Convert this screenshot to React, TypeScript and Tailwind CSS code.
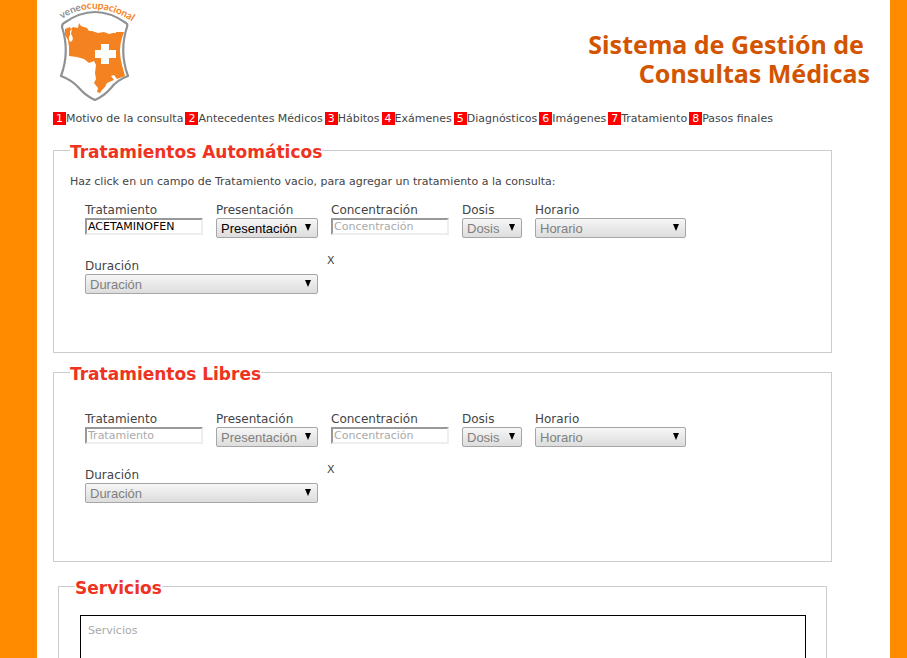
import { useId } from "react";
import type { ReactNode } from "react";

const steps = [
  "Motivo de la consulta",
  "Antecedentes Médicos",
  "Hábitos",
  "Exámenes",
  "Diagnósticos",
  "Imágenes",
  "Tratamiento",
  "Pasos finales",
];

function Logo() {
  return (
    <svg width="84" height="104" viewBox="0 0 84 104" role="img" aria-label="veneocupacional">
      <defs>
        <path id="logo-arc" d="M9 19 Q42 -3 80 22" />
      </defs>
      <text fontSize="10" fontFamily="Lato, sans-serif" fontWeight="700" fill="#8f9193">
        <textPath href="#logo-arc">
          vene<tspan fill="#f58220">ocupacional</tspan>
        </textPath>
      </text>
      <path
        d="M11 23 Q42 1 73 23 Q75 24 74 27 Q66 52 75 76 Q64 80 58 88 Q51 96 42 100 Q33 96 26 88 Q19 80 8 76 Q17 52 9 27 Q9 24 11 23 Z"
        fill="#fff"
        stroke="#8f9193"
        strokeWidth="2.2"
        strokeLinejoin="round"
      />
      <path
        d="M12 29 L17 27 L18 29 L20 27 L25 28 L26 23 L28 26 L34 28 L36 31 L39 31 L45 33 L51 32 L56 34 L60 33 H63 V32 L71 32 L69 38 Q65 50 69 65 L72 76 L64 79 L61 75 L58 76 L61 80 L54 83 L52 87 L49 90 L47 93 L44 92 L45 88 L41 83 L43 79 L42 73 L43 65 L41 61 L36 63 L31 59 L24 57 L16 56 V47 L15 40 L12 35 Z"
        fill="#f58220"
      />
      <path d="M17 31 L19 29 L18 34 Q21 38 19 41 Q17 43 16 40 Q15 37 17 35 Z" fill="#fff" />
      <path d="M48 44 H56 V50 H63 V58 H56 V64 H48 V58 H42 V50 H48 Z" fill="#fff" />
    </svg>
  );
}

function Panel({ title, className, children }: { title: string; className: string; children: ReactNode }) {
  return (
    <fieldset className={`min-w-0 border border-[#cccccc] ${className}`}>
      <legend className="ml-4 pt-1 text-[17px] leading-5 font-bold text-[#ee3322]">{title}</legend>
      {children}
    </fieldset>
  );
}

function TextField({ label, value }: { label: string; value?: string }) {
  const id = useId();
  return (
    <div className="w-[118px]">
      <label htmlFor={id} className="block text-xs leading-4">{label}</label>
      <input
        id={id}
        type="text"
        defaultValue={value}
        placeholder={label}
        className="block h-[17px] w-full border-2 border-t-[#999999] border-r-[#eeeeee] border-b-[#eeeeee] border-l-[#999999] bg-white px-px text-[11px] text-black placeholder:text-[#aaaaaa]"
      />
    </div>
  );
}

function SelectField({ label, width, active }: { label: string; width: string; active?: boolean }) {
  const id = useId();
  return (
    <div className={width}>
      <label htmlFor={id} className="block text-xs leading-4">{label}</label>
      <div className="relative">
        <select
          id={id}
          className={`block h-5 w-full appearance-none rounded-xs border border-[#a6a6a6] bg-linear-to-b from-[#f6f6f6] to-[#dddddd] pt-px pl-1 font-['Liberation_Sans',Arial,sans-serif] text-[13px] leading-[18px] ${active ? "text-black" : "text-[#808080]"}`}
        >
          <option>{label}</option>
        </select>
        <svg className="pointer-events-none absolute top-[6px] right-[7px]" width="6" height="7" viewBox="0 0 6 7" aria-hidden="true">
          <path d="M0 0 H6 L3 7 Z" fill="#000" />
        </svg>
      </div>
    </div>
  );
}

function Treatment({ name }: { name?: string }) {
  return (
    <div className="pl-[31px]">
      <div className="flex flex-wrap gap-x-[13px]">
        <TextField label="Tratamiento" value={name} />
        <SelectField label="Presentación" width="w-[102px]" active={Boolean(name)} />
        <TextField label="Concentración" />
        <SelectField label="Dosis" width="w-[60px]" />
        <SelectField label="Horario" width="w-[151px]" />
      </div>
      <div className="mt-3 flex items-start gap-[9px]">
        <div className="pt-2">
          <SelectField label="Duración" width="w-[233px]" />
        </div>
        <button type="button" aria-label="Quitar tratamiento X" className="pt-[3px] text-[11px] leading-4">X</button>
      </div>
    </div>
  );
}

export default function App() {
  return (
    <div className="h-screen overflow-hidden bg-[#ff8c00] pr-[17px] pl-[37px] font-['DejaVu_Sans',Verdana,sans-serif] text-[11px] text-[#444444]">
      <main className="min-h-full bg-white px-4">
        <header className="flex h-[104px] items-start justify-between">
          <Logo />
          <h1 className="mt-[30px] mr-1 text-right font-['Noto_Sans','Open_Sans',sans-serif] text-[25px] leading-[29px] font-bold text-[#d35400]">
            <span className="mr-[6px]">Sistema de Gestión de</span>
            <br />
            Consultas Médicas
          </h1>
        </header>

        <nav aria-label="Pasos de la consulta" className="mt-2 leading-[13px]">
          <ol className="flex flex-wrap gap-x-[2px]">
            {steps.map((step, i) => (
              <li key={step} className="flex">
                <span className="w-[13px] bg-[#ff0000] text-center text-white">{i + 1}</span>
                <a href="#paso">{step}</a>
              </li>
            ))}
          </ol>
        </nav>

        <div className="mt-[13px] mr-[42px]">
          <Panel title="Tratamientos Automáticos" className="pb-[58px]">
            <p className="my-3 ml-4 leading-4">
              Haz click en un campo de Tratamiento vacio, para agregar un tratamiento a la consulta:
            </p>
            <Treatment name="ACETAMINOFEN" />
          </Panel>
          <Panel title="Tratamientos Libres" className="mt-[7px] pt-[27px] pb-[58px]">
            <Treatment />
          </Panel>
          <Panel title="Servicios" className="mx-[5px] mt-3 pb-5">
            <textarea
              aria-label="Servicios"
              placeholder="Servicios"
              className="mt-[17px] ml-[21px] block h-[120px] w-[calc(100%-41px)] resize-none border border-black px-[7px] py-[7px] leading-4 placeholder:text-[#aaaaaa]"
            />
          </Panel>
        </div>
      </main>
    </div>
  );
}
